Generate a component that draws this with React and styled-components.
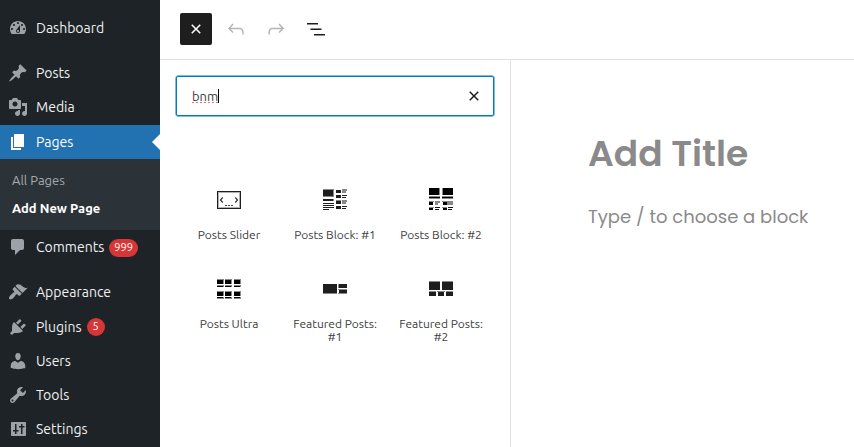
import React from 'react';
import styled, { createGlobalStyle } from 'styled-components';

const GlobalStyle = createGlobalStyle`
  *, *::before, *::after { box-sizing: border-box; }
  body { margin: 0; overflow: hidden; background: #fff; font-family: Ubuntu, "Noto Sans", sans-serif; }
  button { border: 0; padding: 0; background: none; font: inherit; color: inherit; }
`;

const Screen = styled.div`
  display: grid;
  grid-template-columns: 160px 1fr;
  width: 854px;
  height: 447px;
  overflow: hidden;
`;

const Sidebar = styled.nav`
  display: flex;
  flex-direction: column;
  padding-top: 11px;
  background: #1d2327;
  color: #f0f0f1;
`;

const MenuItem = styled.a`
  display: flex;
  align-items: center;
  flex: none;
  height: 34.2px;
  margin-top: ${(p) => (p.$gap ? '11px' : 0)};
  padding-left: 8px;
  background: ${(p) => (p.$current ? '#2271b1' : 'transparent')};
  color: ${(p) => (p.$current ? '#fff' : '#f0f0f1')};
  --icon: ${(p) => (p.$current ? '#fff' : '#9ca2a7')};
`;

const MenuIcon = styled.svg`
  width: 20px;
  height: 20px;
  margin-right: 8px;
  fill: var(--icon);
  fill-rule: evenodd;
`;

const MenuLabel = styled.span`
  font-size: 14px;
  line-height: 18px;
  white-space: nowrap;
`;

const Badge = styled.span`
  min-width: 18px;
  height: 18px;
  margin: 1px 0 0 5px;
  padding: 0 5px;
  border-radius: 9px;
  background: #d63638;
  color: #fff;
  font-size: 11px;
  line-height: 17px;
  text-align: center;
`;

const CurrentArrow = styled.span`
  margin-left: auto;
  border: 8px solid transparent;
  border-left-width: 0;
  border-right-color: #fff;
`;

const Submenu = styled.div`
  display: flex;
  flex-direction: column;
  flex: none;
  height: 71.4px;
  padding: 8px 12px 0;
  background: #2c3338;
`;

const SubmenuLink = styled.a`
  height: 28px;
  font-size: 13px;
  line-height: 27px;
  font-weight: ${(p) => (p.$current ? 700 : 400)};
  color: ${(p) => (p.$current ? '#fff' : '#a7aaad')};
  white-space: nowrap;
`;

const Editor = styled.main`
  display: grid;
  grid-template-rows: 60px 1fr;
  min-width: 0;
`;

const Toolbar = styled.header`
  display: flex;
  align-items: center;
  gap: 8px;
  padding: 0 0 2px 20px;
  border-bottom: 1px solid #e0e0e0;
`;

const ToolButton = styled.button`
  display: grid;
  place-items: center;
  width: 32px;
  height: 32px;
  border-radius: 2px;
  background: ${(p) => (p.$primary ? '#1e1e1e' : 'transparent')};
  color: ${(p) => (p.$primary ? '#fff' : p.$muted ? '#b5b5b5' : '#1e1e1e')};
`;

const ToolIcon = styled.svg`
  width: 24px;
  height: 24px;
  fill: currentColor;
`;

const Workspace = styled.div`
  display: grid;
  grid-template-columns: 351px 1fr;
`;

const Inserter = styled.aside`
  padding: 16px 16px 0;
  border-right: 1px solid #e0e0e0;
`;

const SearchField = styled.div`
  display: flex;
  align-items: center;
  width: 318px;
  height: 40px;
  padding: 0 7px 0 15px;
  border: 1px solid #007cba;
  border-radius: 2px;
  box-shadow: 0 0 0 0.5px #007cba;
  color: #3c3c3c;
`;

const Query = styled.span`
  padding-bottom: 0;
  background: repeating-linear-gradient(90deg, #f26a6a 0 2px, transparent 2px 4px) left 16px / 100% 1px no-repeat;
  font-size: 13px;
  line-height: 20px;
`;

const Caret = styled.span`
  width: 1px;
  height: 14px;
  background: #000;
`;

const ClearButton = styled.button`
  display: grid;
  margin-left: auto;
  color: #1e1e1e;
`;

const BlockGrid = styled.div`
  display: grid;
  grid-template-columns: repeat(3, 106px);
  grid-auto-rows: 89px;
  margin-top: 60px;
`;

const BlockItem = styled.button`
  display: flex;
  flex-direction: column;
  align-items: center;
  padding-top: 12px;
  color: #3c3c3c;
`;

const BlockIcon = styled.svg`
  width: 24px;
  height: 24px;
  margin-bottom: 16px;
  fill: #1e1e1e;
  shape-rendering: crispEdges;
`;

const BlockLabel = styled.span`
  font-size: 12px;
  line-height: 13px;
  white-space: pre-line;
`;

const Canvas = styled.section`
  display: flex;
  flex-direction: column;
  padding: 70px 0 0 77px;
  color: #8a8a8a;
  font-family: Poppins, Inter, sans-serif;
`;

const Title = styled.h1`
  margin: 0;
  font-size: 36px;
  font-weight: 600;
  line-height: 48px;
  white-space: nowrap;
`;

const Prompt = styled.p`
  margin: 24px 0 0;
  font-size: 18px;
  line-height: 30px;
  white-space: nowrap;
`;

const MENU_TOP = [
  { label: 'Dashboard', d: 'M3.76 16h12.48c1.1-1.37 1.76-3.11 1.76-5 0-4.42-3.58-8-8-8s-8 3.58-8 8c0 1.89.66 3.63 1.76 5zM10 4c.55 0 1 .45 1 1s-.45 1-1 1-1-.45-1-1 .45-1 1-1zM6 6c.55 0 1 .45 1 1s-.45 1-1 1-1-.45-1-1 .45-1 1-1zm8 0c.55 0 1 .45 1 1s-.45 1-1 1-1-.45-1-1 .45-1 1-1zm-5.37 5.55L12 7v6c0 1.1-.9 2-2 2s-2-.9-2-2c0-.57.24-1.08.63-1.45zM4 10c.55 0 1 .45 1 1s-.45 1-1 1-1-.45-1-1 .45-1 1-1zm12 0c.55 0 1 .45 1 1s-.45 1-1 1-1-.45-1-1 .45-1 1-1zm-5 3c0-.55-.45-1-1-1s-1 .45-1 1 .45 1 1 1 1-.45 1-1z' },
  { label: 'Posts', gap: true, d: 'M10.44 3.02l1.82-1.82 6.36 6.35-1.83 1.82c-1.05-.68-2.48-.57-3.41.36l-.75.75c-.92.93-1.04 2.35-.35 3.41l-1.83 1.82-2.41-2.41-2.8 2.79c-.42.42-3.38 2.71-3.8 2.29s1.86-3.39 2.28-3.81l2.79-2.79L4.1 9.36l1.83-1.82c1.05.69 2.48.57 3.4-.36l.75-.75c.93-.92 1.05-2.35.36-3.41z' },
  { label: 'Media', d: 'M13 11V4c0-.55-.45-1-1-1h-1.67L9 1H5L3.67 3H2c-.55 0-1 .45-1 1v7c0 .55.45 1 1 1h10c.55 0 1-.45 1-1zM7 4.5c1.38 0 2.5 1.12 2.5 2.5S8.38 9.5 7 9.5 4.5 8.38 4.5 7 5.62 4.5 7 4.5zM14 6h5v10.5c0 1.38-1.12 2.5-2.5 2.5S14 17.88 14 16.5s1.12-2.5 2.5-2.5c.17 0 .34.02.5.05V9h-3V6zm-4 8.05V13h2v3.5c0 1.38-1.12 2.5-2.5 2.5S7 17.88 7 16.5 8.12 14 9.5 14c.17 0 .34.02.5.05z' },
  { label: 'Pages', current: true, d: 'M6 15V2h10v13H6zm-1 1h8v2H3V5h2v11z' },
];

const MENU_BOTTOM = [
  { label: 'Comments', badge: '999', d: 'M5 2h9c1.1 0 2 .9 2 2v7c0 1.1-.9 2-2 2h-2l-5 5v-5H5c-1.1 0-2-.9-2-2V4c0-1.1.9-2 2-2z' },
  { label: 'Appearance', gap: true, d: 'M14.48 11.06L7.41 3.99l1.5-1.5c.5-.56 2.3-.47 3.51.32 1.21.8 1.43 1.28 2.91 2.1 1.18.64 2.45 1.26 4.45.85zm-.71.71L6.7 4.7 4.93 6.47c-.39.39-.39 1.02 0 1.41l1.06 1.06c.39.39.39 1.03 0 1.42-.6.6-1.43 1.11-2.21 1.69-.35.26-.7.53-1.01.84C1.43 14.23.4 16.08 1.4 17.07c.99 1 2.84-.03 4.18-1.36.31-.31.58-.66.85-1.02.57-.78 1.08-1.61 1.69-2.21.39-.39 1.02-.39 1.41 0l1.06 1.06c.39.39 1.02.39 1.41 0z' },
  { label: 'Plugins', badge: '5', d: 'M13.11 4.36L9.87 7.6 8 5.73l3.24-3.24c.35-.34 1.05-.2 1.56.32.52.51.66 1.21.31 1.55zm-8 1.77l.91-1.12 9.01 9.01-1.19.84c-.71.71-2.63 1.16-3.82 1.16H6.14L4.9 17.26c-.59.59-1.54.59-2.12 0-.59-.58-.59-1.53 0-2.12l1.24-1.24v-3.88c0-1.13.4-3.19 1.09-3.89zm7.26 3.97l3.24-3.24c.34-.35 1.04-.21 1.55.31.52.51.66 1.21.31 1.55l-3.24 3.25z' },
  { label: 'Users', d: 'M10 9.25c-2.27 0-2.73-3.44-2.73-3.44C7 4.02 7.82 2 9.97 2c2.16 0 2.98 2.02 2.71 3.81 0 0-.41 3.44-2.68 3.44zm0 2.57L12.72 10c2.39 0 4.52 2.33 4.52 4.53v2.49s-3.65 1.13-7.24 1.13c-3.65 0-7.24-1.13-7.24-1.13v-2.49c0-2.25 1.94-4.48 4.47-4.48z' },
  { label: 'Tools', d: 'M16.68 9.77c-1.34 1.34-3.3 1.67-4.95.99l-5.41 6.52c-.99.99-2.59.99-3.58 0s-.99-2.59 0-3.57l6.52-5.42c-.68-1.65-.35-3.61.99-4.95 1.28-1.28 3.12-1.62 4.72-1.06l-2.89 2.89 2.82 2.82 2.86-2.87c.53 1.58.18 3.39-1.08 4.65zM3.81 16.21c.4.39 1.04.39 1.43 0 .4-.4.4-1.04 0-1.43-.39-.4-1.03-.4-1.43 0-.39.39-.39 1.03 0 1.43z' },
  { label: 'Settings', d: 'M4 3h13c.6 0 1 .4 1 1v12c0 .6-.4 1-1 1H4c-.6 0-1-.4-1-1V4c0-.6.4-1 1-1zM7 5v6H5v1.500h2V15h1.500v-2.500h2V11h-2V5zM13 5v2h-2v1.500h2V15h1.500V8.500h2V7h-2V5z' },
];

const rects = (list, fill) => list.map(([x, y, w, h], i) => <rect key={i} x={x} y={y} width={w} height={h} fill={fill} />);

const BLOCKS = [
  {
    label: 'Posts Slider',
    art: (
      <g fill="none" stroke="#1e1e1e">
        <rect x="0.5" y="3.5" width="23" height="17" />
        <rect x="1.5" y="4.5" width="21" height="15" stroke="#b0b0b0" />
        <path d="M5.700 9.500L3.500 12l2.200 2.500M18.300 9.500l2.200 2.500-2.200 2.500" stroke="#333" strokeWidth="1.2" shapeRendering="auto" />
        <path d="M8 17.500h8" stroke="#444" strokeDasharray="2 1" />
      </g>
    ),
  },
  {
    label: 'Posts Block: #1',
    art: (
      <>
        {rects([[0, 1, 11, 8], [10, 11, 1, 2], [13, 2, 5, 3], [13, 7, 5, 3], [13, 12, 5, 4], [13, 18, 5, 3], [19, 1, 5, 2], [19, 3, 4, 2], [19, 12, 5, 2], [19, 14, 4, 2]], '#888')}
        {rects([[0, 2, 10, 6], [0, 11, 10, 2], [0, 15, 11, 1], [0, 17, 11, 1], [0, 19, 11, 1], [0, 21, 6, 1]])}
        {rects([[13, 2, 5, 3], [13, 7, 5, 3], [13, 13, 5, 3], [13, 18, 5, 3], [19, 7, 5, 1], [19, 9, 4, 1], [19, 18, 5, 1], [19, 20, 4, 1]])}
      </>
    ),
  },
  {
    label: 'Posts Block: #2',
    art: (
      <>
        {rects([[0, 0, 10, 7], [14, 0, 10, 7], [0, 9, 11, 1], [13, 9, 11, 1], [0, 14, 4, 3], [14, 14, 4, 3], [0, 20, 4, 2], [14, 20, 4, 2]], '#000')}
        {rects([[6, 19, 5, 1], [6, 21, 4, 1], [19, 19, 5, 1], [19, 21, 4, 1]], '#111')}
        {rects([[10, 0, 1, 7], [13, 0, 1, 7], [0, 8, 11, 1], [13, 8, 11, 1], [0, 10, 11, 1], [13, 10, 11, 1], [0, 13, 5, 1], [13, 13, 11, 1], [6, 13, 5, 2], [6, 15, 3, 2], [18, 14, 6, 3], [0, 19, 5, 1], [13, 19, 5, 1]], '#888')}
      </>
    ),
  },
  {
    label: 'Posts Ultra',
    art: [0, 8, 17].map((x) => (
      <g key={x}>
        {rects([[x, 2, 7, 5], [x, 8, 7, 2], [x, 14, 7, 5], [x, 20, 7, 2]], '#888')}
        {rects([[x, 3, 6, 4], [x, 9, 6, 1], [x, 15, 6, 4], [x, 20, 6, 1]], '#000')}
      </g>
    )),
  },
  {
    label: 'Featured Posts:\n#1',
    art: (
      <>
        {rects([[0, 7, 14, 9], [16, 7, 8, 4], [16, 13, 8, 3]])}
        {rects([[0, 16, 14, 1], [15, 7, 1, 4], [15, 12, 9, 1], [15, 16, 9, 1]], '#888')}
      </>
    ),
  },
  {
    label: 'Featured Posts:\n#2',
    art: (
      <>
        {rects([[0, 5, 11, 8], [13, 5, 11, 8], [0, 15, 7, 4], [9, 15, 6, 4], [17, 15, 7, 4]])}
        {rects([[0, 4, 11, 1], [13, 4, 11, 1], [0, 14, 7, 1], [8, 14, 8, 1], [17, 14, 7, 1]], '#888')}
      </>
    ),
  },
];

const CLOSE = 'M12 13.06l3.712 3.713 1.061-1.06L13.061 12l3.712-3.712-1.06-1.06L12 10.938 8.288 7.227l-1.061 1.06L10.939 12l-3.712 3.712 1.06 1.061L12 13.061z';
const UNDO = 'M18.3 11.7c-.6-.6-1.4-.9-2.3-.9H6.7l2.9-3.3-1.1-1-4.5 5L8.5 16l1-1-2.7-2.7H16c.5 0 .9.2 1.3.5 1 1 1 3.4 1 4.5v.3h1.5v-.2c0-1.5 0-4.3-1.5-5.7z';
const REDO = 'M15.6 6.5l-1.1 1 2.9 3.3H8c-.9 0-1.7.3-2.3.9-1.4 1.5-1.4 4.2-1.4 5.6v.2h1.5v-.3c0-1.1 0-3.5 1-4.5.3-.3.7-.5 1.3-.5h9.2L14.5 15l1.1 1.1 4.6-4.6-4.6-5z';
const OUTLINE = 'M3 6h11v1.5H3zM6.5 11.5h11V13h-11zM10 17h11v1.500H10z';

const Glyph = ({ d }) => (
  <ToolIcon viewBox="0 0 24 24"><path d={d} /></ToolIcon>
);

const Entry = ({ item }) => (
  <MenuItem $gap={item.gap} $current={item.current}>
    <MenuIcon viewBox="0 0 20 20"><path d={item.d} /></MenuIcon>
    <MenuLabel>{item.label}</MenuLabel>
    {item.badge && <Badge>{item.badge}</Badge>}
    {item.current && <CurrentArrow />}
  </MenuItem>
);

export default function App() {
  return (
    <Screen>
      <GlobalStyle />
      <Sidebar>
        {MENU_TOP.map((item) => <Entry key={item.label} item={item} />)}
        <Submenu>
          <SubmenuLink>All Pages</SubmenuLink>
          <SubmenuLink $current>Add New Page</SubmenuLink>
        </Submenu>
        {MENU_BOTTOM.map((item) => <Entry key={item.label} item={item} />)}
      </Sidebar>
      <Editor>
        <Toolbar>
          <ToolButton $primary aria-label="Close inserter"><Glyph d={CLOSE} /></ToolButton>
          <ToolButton $muted aria-label="Undo"><Glyph d={UNDO} /></ToolButton>
          <ToolButton $muted aria-label="Redo"><Glyph d={REDO} /></ToolButton>
          <ToolButton aria-label="Document overview"><Glyph d={OUTLINE} /></ToolButton>
        </Toolbar>
        <Workspace>
          <Inserter>
            <SearchField>
              <Query>bnm</Query>
              <Caret />
              <ClearButton aria-label="Reset search"><Glyph d={CLOSE} /></ClearButton>
            </SearchField>
            <BlockGrid>
              {BLOCKS.map((b) => (
                <BlockItem key={b.label}>
                  <BlockIcon viewBox="0 0 24 24">{b.art}</BlockIcon>
                  <BlockLabel>{b.label}</BlockLabel>
                </BlockItem>
              ))}
            </BlockGrid>
          </Inserter>
          <Canvas>
            <Title>Add Title</Title>
            <Prompt>Type / to choose a block</Prompt>
          </Canvas>
        </Workspace>
      </Editor>
    </Screen>
  );
}
